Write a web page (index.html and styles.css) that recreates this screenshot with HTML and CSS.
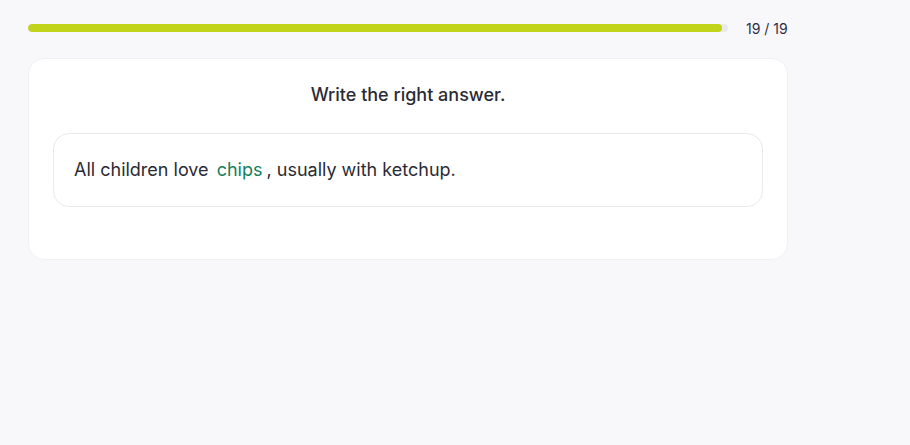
FILE: index.html
```html
<!DOCTYPE html>
<html>
<head>
<meta charset="utf-8">
<link rel="stylesheet" href="styles.css">
</head>
<body>
<div class="page">
  <div class="progress-row">
    <div class="track"><div class="fill" style="width: 99.1%"></div></div>
    <div class="count">19 / 19</div>
  </div>
  <div class="card">
    <div class="title">Write the right answer.</div>
    <div class="sentence">All children love <span class="answer">chips</span>, usually with ketchup.</div>
  </div>
</div>
</body>
</html>
```
FILE: styles.css
```css
html, body {
  margin: 0;
  padding: 0;
  background: #f8f8fa;
  font-family: Inter, "Noto Sans", sans-serif;
  color: #2b2b36;
}
.page {
  width: 760px;
  padding: 19px 28px 0 28px;
}
.progress-row {
  display: flex;
  align-items: center;
  gap: 18px;
  height: 18px;
}
.track {
  width: 700px;
  height: 8px;
  border-radius: 4px;
  background: #e9e9ee;
  overflow: hidden;
}
.fill {
  height: 100%;
  background: #c2d41a;
  border-radius: 4px;
}
.count {
  font-size: 14px;
  color: #2b2f45;
  white-space: nowrap;
}
.card {
  margin-top: 21px;
  background: #ffffff;
  border: 1px solid #f0f0f3;
  border-radius: 16px;
  padding: 23px 24px 52px 24px;
}
.title {
  text-align: center;
  font-size: 18px;
  font-weight: 500;
  line-height: 26px;
  color: #2b2b36;
}
.sentence {
  margin-top: 25px;
  border: 1px solid #e9e9ec;
  border-radius: 16px;
  padding: 23px 20px 24px 20px;
  font-size: 18px;
  line-height: 25px;
  color: #2b2b36;
}
.answer {
  color: #127f5c;
  margin: 0 4px 0 3px;
}
```
